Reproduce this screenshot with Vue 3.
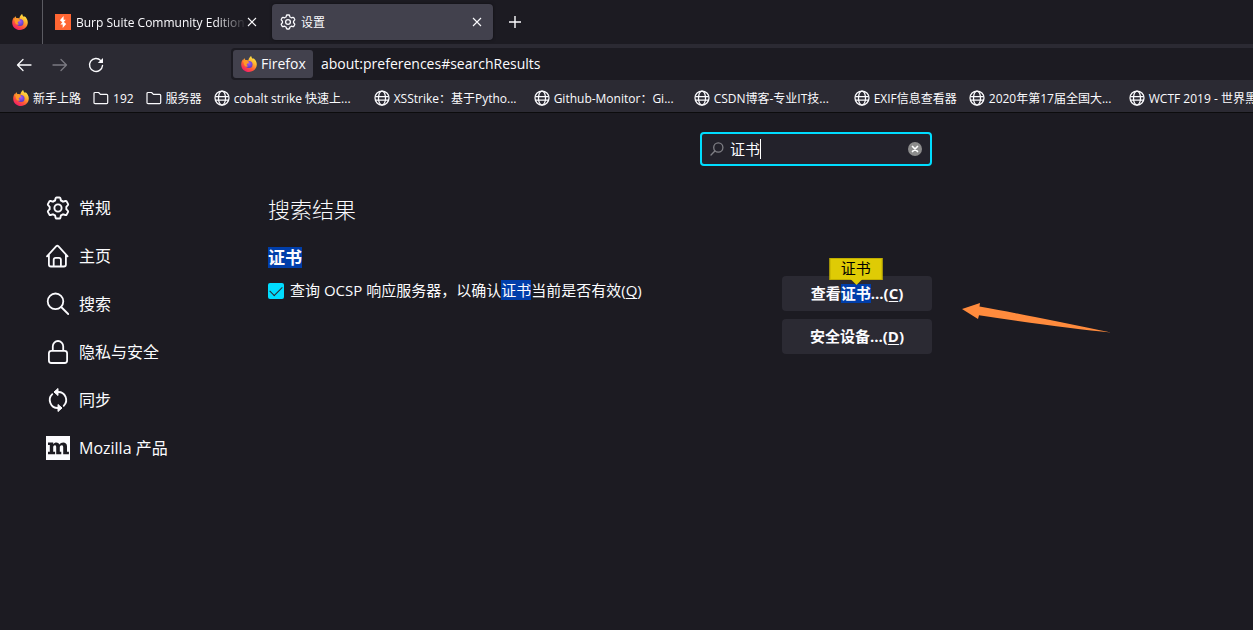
<script setup>
import { ref } from 'vue'

const query = ref('证书')
const ocsp = ref(true)

const bookmarks = [
  { icon: 'firefox', label: '新手上路' },
  { icon: 'folder', label: '192' },
  { icon: 'folder', label: '服务器' },
  { icon: 'globe', label: 'cobalt strike 快速上...', wide: true },
  { icon: 'globe', label: 'XSStrike：基于Pytho...', wide: true },
  { icon: 'globe', label: 'Github-Monitor：Gi...', wide: true },
  { icon: 'globe', label: 'CSDN博客-专业IT技...', wide: true },
  { icon: 'globe', label: 'EXIF信息查看器' },
  { icon: 'globe', label: '2020年第17届全国大...', wide: true },
  { icon: 'globe', label: 'WCTF 2019 - 世界黑...', wide: true },
]

const categories = [
  { icon: 'gear', label: '常规' },
  { icon: 'home', label: '主页' },
  { icon: 'search', label: '搜索' },
  { icon: 'lock', label: '隐私与安全' },
  { icon: 'sync', label: '同步' },
  { icon: 'mozilla', label: 'Mozilla 产品' },
]
</script>

<template>
  <div class="browser">
    <svg class="defs" aria-hidden="true">
      <defs>
        <linearGradient id="flame" x1="0.85" y1="0.05" x2="0.25" y2="1">
          <stop offset="0" stop-color="#fff04a" />
          <stop offset="0.35" stop-color="#ffb02e" />
          <stop offset="0.65" stop-color="#ff5b36" />
          <stop offset="1" stop-color="#f2156c" />
        </linearGradient>
        <radialGradient id="orb" cx="0.5" cy="0.35" r="0.7">
          <stop offset="0" stop-color="#a55cf5" />
          <stop offset="1" stop-color="#4b35c0" />
        </radialGradient>
        <symbol id="firefox" viewBox="0 0 16 16">
          <path fill="url(#flame)" d="M10.2 0c.1 1.4 1 2.100 2 3.100.2-.5.2-.8.1-1.200 2.200 1.600 3.600 4 3.500 6.700C15.700 12.900 12.300 16 8 16 3.700 16 .3 12.900.2 8.700.1 6.300.9 4.700 1.800 3.400c.1.400.1.700.2 1 .4-1 1-1.700 1.700-2.100 0 .8.200 1.300.7 1.700 1.200-.1 2.200.1 3 .5C7.600 2.500 8.700 1 10.200 0z" />
          <circle cx="8" cy="8.600" r="3.500" fill="url(#orb)" />
          <path fill="#ff9828" d="M1.900 5c1.600-1.300 4.200-1 5.400.2.600.5.500 1.200.6 1.700-.8.500-1.800.6-2.100 1.300-.3.900.5 1.600 1.500 1.800-1.500 1.300-3.800.5-4.300-1.400-.3-1.300-.2-2.200-1.100-3.600z" />
        </symbol>
        <symbol id="burp" viewBox="0 0 16 16">
          <path fill="#ff6633" d="M0 0h16v16H0z" />
          <path fill="#fff" d="M8.600 2v3.800h2.200L8.900 8l2.300 1.900L7.700 14v-3.500H5.400L7.300 8.200 4.900 6.200z" />
        </symbol>
        <symbol id="folder" viewBox="0 0 16 16">
          <path fill="none" stroke="currentColor" stroke-width="1.200" stroke-linejoin="round" d="M1 12.500V3.600Q1 2.500 2.100 2.500h3.500L7.400 4.300h6.200Q14.700 4.300 14.700 5.400v7.100q0 1.100-1.100 1.100H2.100Q1 13.600 1 12.500z" />
        </symbol>
        <symbol id="globe" viewBox="0 0 16 16">
          <g fill="none" stroke="currentColor" stroke-width="1.250">
            <circle cx="8" cy="8" r="7" />
            <ellipse cx="8" cy="8" rx="3.500" ry="7" />
            <path d="M1.200 6.500h13.600M1.200 10h13.600" />
          </g>
        </symbol>
        <symbol id="gear" viewBox="0 0 24 24">
          <g fill="none" stroke="currentColor" stroke-width="1.900" stroke-linejoin="round">
            <circle cx="12" cy="12" r="3.600" />
            <path d="M10.500 1.500h3q.7 0 .9.800l.5 2.200q1.200.4 2.200 1.200l2.300-.7q.8-.2 1.200.4l1.400 2.500q.4.700-.1 1.300L20.300 10.800q.2 1.200 0 2.400l1.600 1.600q.5.600.1 1.300l-1.400 2.500q-.4.600-1.200.4l-2.300-.7q-1 .8-2.200 1.200l-.5 2.200q-.2.800-.9.800h-3q-.7 0-.9-.8l-.5-2.200q-1.200-.4-2.200-1.200L4.600 19q-.8.200-1.200-.4L2 16.100q-.4-.7.100-1.300l1.600-1.600q-.2-1.200 0-2.400L2.100 9.200Q1.600 8.600 2 7.900l1.400-2.500Q3.800 4.800 4.600 5l2.300.7q1-.8 2.200-1.200l.5-2.200q.2-.8.900-.8z" />
          </g>
        </symbol>
        <symbol id="home" viewBox="0 0 24 24">
          <path fill="none" stroke="currentColor" stroke-width="1.800" stroke-linecap="round" stroke-linejoin="round" d="M1 12.300 10.300 2.200q1-1 2 0L21.600 12.300M2.900 10.500v10q0 2 2 2h13q2 0 2-2v-10M7.700 22V15.800q0-2 2-2h3.200q2 0 2 2V22" />
        </symbol>
        <symbol id="search" viewBox="0 0 24 24">
          <g fill="none" stroke="currentColor" stroke-width="1.800" stroke-linecap="round">
            <circle cx="9.500" cy="9.300" r="7.800" />
            <path d="m15.200 15 7 7" />
          </g>
        </symbol>
        <symbol id="lock" viewBox="0 0 24 24">
          <g fill="none" stroke="currentColor" stroke-width="1.800">
            <rect x="2.900" y="10.800" width="18.200" height="12.200" rx="2.500" />
            <path d="M6.800 10.800V6.200a5.200 5.200 0 0 1 10.400 0v4.600" />
          </g>
        </symbol>
        <symbol id="sync" viewBox="0 0 24 24">
          <path fill="none" stroke="currentColor" stroke-width="1.800" stroke-linecap="round" d="M10.500 4h1.500a8 8 0 0 1 5.700 13.800M13.500 20H12A8 8 0 0 1 6.300 6.200" />
          <path fill="currentColor" stroke="currentColor" stroke-linejoin="round" d="M12 .5v7L8 4zM12 16.500v7l4-3.500z" />
        </symbol>
        <symbol id="mozilla" viewBox="0 0 24 24">
          <path fill="#fbfbfe" d="M0 0h24v24H0z" />
          <path fill="#1c1b22" d="M2 6.600h5.200v1.700c1.500-2.500 5.200-2.600 6.200.3 1.500-3.100 7.600-3.300 7.600 1.600v5.500h1.900v2.500h-5.700v-7c0-3-3.400-2.200-3.400 0v4.500h1.500v2.500h-5.100v-7c0-3-3-2.200-3 0v4.500h1.900v2.500H2v-2.500h1.800V9.100H2z" />
        </symbol>
        <symbol id="close" viewBox="0 0 10 10">
          <path fill="none" stroke="currentColor" stroke-width="1.100" d="m1 1 8 8M9 1 1 9" />
        </symbol>
      </defs>
    </svg>

    <header>
      <div class="tabs">
        <button class="pinned" aria-label="Firefox View"><svg class="i16"><use href="#firefox" /></svg></button>
        <div class="tab">
          <svg class="i16"><use href="#burp" /></svg>
          <span class="title fade">Burp Suite Community Edition</span>
          <button class="close" aria-label="关闭标签页"><svg class="i10"><use href="#close" /></svg></button>
        </div>
        <div class="tab active">
          <svg class="i16"><use href="#gear" /></svg>
          <span class="title">设置</span>
          <button class="close" aria-label="关闭标签页"><svg class="i10"><use href="#close" /></svg></button>
        </div>
        <button class="new-tab" aria-label="新建标签页">
          <svg width="14" height="14" viewBox="0 0 14 14"><path fill="none" stroke="currentColor" stroke-width="1.400" d="M7 1v12M1 7h12" /></svg>
        </button>
      </div>

      <div class="toolbar">
        <button class="tool" aria-label="后退">
          <svg class="i16" viewBox="0 0 16 16"><path fill="none" stroke="currentColor" stroke-width="1.300" stroke-linecap="round" stroke-linejoin="round" d="M15 8H1.500M7 2.500 1.500 8 7 13.500" /></svg>
        </button>
        <button class="tool" aria-label="前进" disabled>
          <svg class="i16" viewBox="0 0 16 16"><path fill="none" stroke="currentColor" stroke-width="1.300" stroke-linecap="round" stroke-linejoin="round" d="M1 8h13.500M9 2.500 14.500 8 9 13.500" /></svg>
        </button>
        <button class="tool" aria-label="刷新">
          <svg class="i16" viewBox="0 0 16 16">
            <path fill="none" stroke="currentColor" stroke-width="1.400" stroke-linecap="round" d="M12.800 3.600A6.500 6.500 0 1 0 14.500 8.500" />
            <path fill="currentColor" d="M15 1v4.600q0 .5-.5.500H9.800z" />
          </svg>
        </button>
        <div class="urlbar">
          <span class="identity"><svg class="i16"><use href="#firefox" /></svg><span class="text">Firefox</span></span>
          <input class="url" type="text" aria-label="地址" value="about:preferences#searchResults">
        </div>
      </div>

      <nav class="bookmarks" aria-label="书签">
        <a v-for="b in bookmarks" :key="b.label" href="#">
          <svg class="i16"><use :href="'#' + b.icon" /></svg>
          <span :class="{ wide: b.wide }">{{ b.label }}</span>
        </a>
      </nav>
    </header>

    <div class="page">
      <nav class="categories" aria-label="设置类别">
        <a v-for="c in categories" :key="c.label" href="#">
          <svg class="i24"><use :href="'#' + c.icon" /></svg>
          <span class="text">{{ c.label }}</span>
        </a>
      </nav>

      <main>
        <div class="search">
          <svg class="lens" viewBox="0 0 14 14"><g fill="none" stroke="currentColor" stroke-width="1.300" stroke-linecap="round"><circle cx="8.300" cy="5.500" r="4.600" /><path d="M4.900 9 1 13" /></g></svg>
          <input v-model="query" type="text" aria-label="在设置中查找">
          <span class="caret"></span>
          <button class="clear" aria-label="清除" @click="query = ''">
            <svg width="14" height="14" viewBox="0 0 14 14"><circle cx="7" cy="7" r="7" fill="#8c8c8c" /><path stroke="#fff" stroke-width="1.700" stroke-linecap="round" d="m4.500 4.500 5 5M9.500 4.500l-5 5" /></svg>
          </button>
        </div>

        <h1>搜索结果</h1>
        <h2><mark>证书</mark></h2>
        <div class="row">
          <div class="option">
            <input id="ocsp" v-model="ocsp" type="checkbox">
            <label for="ocsp">查询 OCSP 响应服务器，以确认<mark>证书</mark>当前是否有效(<u>Q</u>)</label>
          </div>
          <div class="actions">
            <button>查看<mark class="anchor">证书<span class="tip">证书</span></mark>...(<u>C</u>)</button>
            <button>安全设备...(<u>D</u>)</button>
          </div>
          <svg class="arrow" viewBox="0 0 150 32" aria-hidden="true"><path fill="#ff8b3d" d="M0 7 18 1 17.500 4.500Q60 12 149 30.600 100 26 17 13.300L16 17z" /></svg>
        </div>
      </main>
    </div>
  </div>
</template>

<style>
html,
body {
  background: #1c1b22;
  overflow: hidden;
}
</style>

<style scoped>
.browser {
  min-height: 100vh;
  background: #1c1b22;
  color: #fbfbfe;
  font-family: "Open Sans", "Noto Sans CJK SC", sans-serif;
  font-size: 15px;
  overflow: hidden;
}
.defs { position: absolute; width: 0; height: 0; }
svg { display: block; flex: none; }
.i10 { width: 10px; height: 10px; }
.i16 { width: 16px; height: 16px; }
.i24 { width: 24px; height: 24px; }
.text { padding-bottom: 2px; }
button {
  border: 0;
  padding: 0;
  background: none;
  color: inherit;
  font: inherit;
}
input { font: inherit; color: inherit; }
a { color: inherit; text-decoration: none; }
mark { background: #003eaa; color: inherit; }

.tabs { display: flex; align-items: center; height: 44px; font-size: 12px; }
.pinned {
  width: 43px;
  height: 44px;
  padding-left: 12px;
  border-right: 1px solid #5b5b62;
}
.tab {
  display: flex;
  align-items: center;
  box-sizing: border-box;
  width: 221px;
  height: 36px;
  padding: 0 11px 0 8px;
  border-radius: 4px;
}
.tab:not(.active) { margin: 0 4px; }
.tab.active { background: #42414d; box-shadow: 0 0 3px rgba(0, 0, 0, 0.5); }
.title { flex: 1; min-width: 0; margin-left: 5px; white-space: nowrap; overflow: hidden; }
.fade { mask-image: linear-gradient(to left, transparent, #000 32px); }
.new-tab { margin-left: 15px; }

.toolbar {
  display: flex;
  align-items: center;
  height: 36px;
  padding-left: 6px;
  background: #2b2a33;
}
.tool { display: flex; align-items: center; justify-content: center; width: 36px; height: 32px; padding-top: 6px; }
.tool:disabled { color: #7b7a82; }
.urlbar {
  display: flex;
  flex: 1;
  align-self: flex-end;
  align-items: center;
  height: 32px;
  margin-left: 117px;
  padding-left: 2px;
  border-radius: 4px 0 0 4px;
  background: #1c1b22;
}
.identity {
  display: flex;
  align-items: center;
  gap: 4px;
  box-sizing: border-box;
  width: 80px;
  height: 28px;
  padding-left: 8px;
  border-radius: 3px;
  background: #42414d;
  font-size: 14px;
}
.url { flex: 1; min-width: 0; padding: 0 8px 2px; border: 0; outline: 0; background: none; font-size: 14px; }

.bookmarks {
  display: flex;
  gap: 12px;
  height: 32px;
  padding-left: 13px;
  border-bottom: 1px solid #0c0c0d;
  background: #2b2a33;
  font-size: 12px;
  white-space: nowrap;
  overflow: hidden;
}
.bookmarks a { display: flex; flex: none; align-items: center; gap: 4px; padding-top: 4px; }
.bookmarks .wide { width: 128px; }

.page { display: flex; padding-top: 19px; }
.categories { flex: none; width: 222px; padding: 52px 0 0 46px; font-size: 16px; }
.categories a { display: flex; align-items: center; gap: 9px; height: 48px; }

main { flex: 1; max-width: 664px; }
.search {
  position: relative;
  display: flex;
  align-items: center;
  box-sizing: border-box;
  width: 232px;
  height: 34px;
  margin-left: auto;
  padding: 0 8px;
  border: 2px solid #00ddff;
  border-radius: 4px;
  background: #23222b;
}
.lens { width: 14px; height: 14px; color: #7f7f85; }
.search input { flex: 1; min-width: 0; padding: 0 6px 2px; border: 0; outline: 0; background: none; }
.caret { position: absolute; left: 58px; top: 5px; width: 1px; height: 20px; background: #fff; }
h1 { margin: 27px 0 0; font-size: 22px; font-weight: 300; line-height: 32px; }
h2 { margin: 22px 0 0; font-size: 17px; font-weight: 700; line-height: 22px; }
h2 mark { display: inline-block; line-height: 21px; }
.row { position: relative; display: flex; justify-content: space-between; padding-top: 7px; }
.option { display: flex; align-items: center; gap: 6px; height: 30px; }
.option label { padding-bottom: 4px; }
.option mark { display: inline-block; line-height: 20px; }
.option input {
  appearance: none;
  flex: none;
  width: 16px;
  height: 16px;
  margin: 0;
  border-radius: 2px;
  background: #42414d;
}
.option input:checked { background: #00ddff; }
.option input:checked::after {
  content: "";
  display: block;
  width: 11px;
  height: 6px;
  margin: 3px 0 0 2px;
  border: solid #2b2a33;
  border-width: 0 0 1px 1px;
  transform: rotate(-45deg);
}
u { text-underline-offset: 2px; text-decoration-skip-ink: none; }
.actions { display: flex; flex-direction: column; gap: 8px; }
.actions button { width: 150px; height: 35px; padding-bottom: 2px; border-radius: 4px; background: #2b2a33; font-weight: 700; }
.anchor { position: relative; display: inline-block; line-height: 19px; }
.tip {
  position: absolute;
  bottom: 23px;
  left: 50%;
  box-sizing: border-box;
  width: 53px;
  height: 22px;
  border: 1px solid #c0ae00;
  background: #dfcb05;
  color: #000;
  font-weight: 400;
  line-height: 18px;
  transform: translateX(-50%);
}
.tip::after {
  content: "";
  position: absolute;
  top: 100%;
  left: 20px;
  border: 6px solid transparent;
  border-top-color: #dfcb05;
  border-bottom: 0;
}
.arrow { position: absolute; left: 100%; top: 33px; width: 150px; height: 32px; margin-left: 30px; }
</style>
